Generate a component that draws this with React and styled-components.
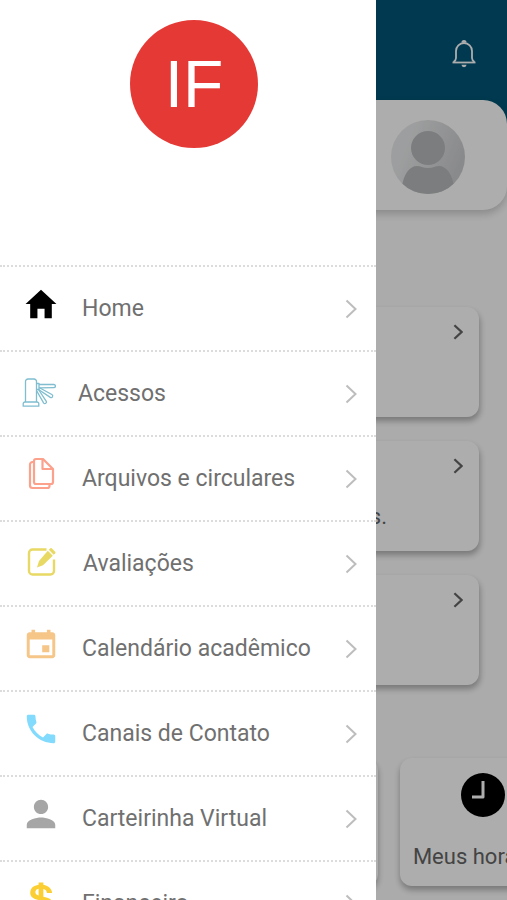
import React from 'react';
import styled, { createGlobalStyle } from 'styled-components';
import {
  IoMdHome,
  IoMdCalendar,
  IoMdCall,
  IoMdPerson,
  IoLogoUsd,
} from 'react-icons/io';

const TurnstileIcon = () => (
  <svg width="34" height="30" viewBox="0 0 34 30" fill="none" stroke="#7fbdcf" strokeWidth="1.3" strokeLinejoin="round">
    <path d="M3.500 24V3.500a2.500 2.500 0 0 1 2.500-2.500h6a2.500 2.500 0 0 1 2.500 2.500V24" />
    <path d="M3 24h12a1.800 1.800 0 0 1 1.800 1.800v2.400H1.200v-2.400A1.800 1.800 0 0 1 3 24z" />
    <path d="M14.500 5.500h2.500v6h-2.500" />
    <path d="M17 6.500h14.800a1.500 1.500 0 0 1 0 3.200L17 9.800" />
    <path d="M17.500 9.800l12.300 6.700a1.600 1.600 0 0 1-1.500 2.900L16.500 11.500" />
    <path d="M16.800 12l7.500 11.300a1.600 1.600 0 0 1-2.600 1.800L14.800 13" />
  </svg>
);

const FilesIcon = () => (
  <svg width="38" height="38" viewBox="0 0 38 38" fill="none" stroke="#fba18c" strokeWidth="2.2" strokeLinejoin="round">
    <path d="M14 4h7l10 10v13a2 2 0 0 1-2 2H14a2 2 0 0 1-2-2V6a2 2 0 0 1 2-2z" />
    <path d="M20.500 4v10H31" />
    <path d="M12 7h-1.500A2.500 2.500 0 0 0 8 9.500v21a2.500 2.500 0 0 0 2.500 2.500h15a2 2 0 0 0 2-2v-2" />
  </svg>
);

const EditIcon = () => (
  <svg width="39" height="38" viewBox="0 0 39 38">
    <path
      d="M24.500 5.500H10.500A3.500 3.500 0 0 0 7 9v18a3.500 3.500 0 0 0 3.500 3.500h18a3.500 3.500 0 0 0 3.500-3.500V15.500"
      fill="none"
      stroke="#e8d964"
      strokeWidth="2.400"
    />
    <path d="M25.800 6.800l5 5L21 21.200l-6 2.300 2-6.500z" fill="#e8d964" />
    <path d="M26.800 5.800l1.500-1.500a1 1 0 0 1 1.400 0l3.500 3.500a1 1 0 0 1 0 1.400l-1.500 1.500z" fill="#e8d964" />
  </svg>
);

const BellIcon = () => (
  <svg width="26" height="30" viewBox="0 0 26 30" fill="none" stroke="#fff" strokeWidth="1.800">
    <path d="M1.500 23.500h23" />
    <path d="M2.500 23c1.500-1 2.500-2 2.500-4v-7a8 8 0 0 1 16 0v7c0 2 1 3 2.500 4" />
    <path d="M11.300 3.500a1.700 1.700 0 0 1 3.400 0" fill="#fff" />
    <path d="M10.500 25.800h5a2.500 2.400 0 0 1-5 0z" fill="#fff" stroke="none" />
  </svg>
);

const UserPicture = () => (
  <svg width="74" height="74" viewBox="0 0 74 74" role="img" aria-label="Perfil">
    <defs>
      <linearGradient id="picture" x1="0" y1="0" x2="1" y2="0.4">
        <stop offset="0.3" stopColor="#e8e9ea" />
        <stop offset="1" stopColor="#cbccce" />
      </linearGradient>
      <clipPath id="round">
        <circle cx="37" cy="37" r="37" />
      </clipPath>
    </defs>
    <g clipPath="url(#round)">
      <rect width="74" height="74" fill="url(#picture)" />
      <path d="M11 68c1-14 8-22 15-22 3 0 6 2 11 2s8-2 11-2c7 0 14 8 15 22v10H11z" fill="#b7b9bb" />
      <circle cx="37" cy="28" r="17" fill="#b7b9bb" />
    </g>
  </svg>
);

const ClockIcon = () => (
  <svg width="44" height="44" viewBox="0 0 44 44">
    <circle cx="22" cy="22" r="22" fill="#000" />
    <path d="M22 8v16H11" fill="none" stroke="#fff" strokeWidth="3" strokeLinejoin="round" />
  </svg>
);

const Chevron = ({ width, height, color, stroke }) => (
  <svg width={width} height={height} viewBox="0 0 12 20" fill="none" stroke={color} strokeWidth={stroke}>
    <path d="M1.500 1.500L10.500 10l-9 8.500" />
  </svg>
);

const menu = [
  { label: 'Home', icon: <IoMdHome size={38} color="#000" />, raised: true },
  { label: 'Acessos', icon: <TurnstileIcon /> },
  { label: 'Arquivos e circulares', icon: <FilesIcon />, raised: true },
  { label: 'Avaliações', icon: <EditIcon /> },
  { label: 'Calendário acadêmico', icon: <IoMdCalendar size={38} color="#f5c688" />, raised: true },
  { label: 'Canais de Contato', icon: <IoMdCall size={38} color="#82dafc" />, raised: true },
  { label: 'Carteirinha Virtual', icon: <IoMdPerson size={38} color="#a6a6a6" />, raised: true },
  { label: 'Financeiro', icon: <IoLogoUsd size={38} color="#fbcf33" />, raised: true },
];

const notices = ['', 's.', ''];

const App = () => {
  return (
    <>
      <GlobalStyle />
      <Page>
        <TopBar>
          <BellButton aria-label="Notificações">
            <BellIcon />
          </BellButton>
        </TopBar>
        <ProfileCard>
          <UserPicture />
        </ProfileCard>
        <Notices>
          {notices.map((text, index) => (
            <Notice key={index}>
              <Chevron width={10} height={16} color="#656565" stroke={2.8} />
              <NoticeText>{text}</NoticeText>
            </Notice>
          ))}
        </Notices>
        <Tiles>
          <Tile />
          <Tile />
          <Tile>
            <ClockIcon />
            <TileLabel>Meus horários</TileLabel>
          </Tile>
        </Tiles>
      </Page>
      <Backdrop />
      <Drawer>
        <DrawerHeader>
          <Initials>IF</Initials>
        </DrawerHeader>
        {menu.map((item) => (
          <MenuItem href="#" key={item.label}>
            <MenuIcon $raised={item.raised}>{item.icon}</MenuIcon>
            <MenuLabel>{item.label}</MenuLabel>
            <Chevron width={12} height={20} color="#bdbdbd" stroke={2} />
          </MenuItem>
        ))}
      </Drawer>
    </>
  );
};

export default App;

const GlobalStyle = createGlobalStyle`
  * {
    box-sizing: border-box;
  }
  body {
    margin: 0;
    font-family: Roboto, sans-serif;
    overflow: hidden;
  }
  svg {
    display: block;
    flex-shrink: 0;
  }
`;

const Page = styled.main`
  min-height: 100vh;
  overflow: hidden;
  background: #fdfdfd;
`;
const TopBar = styled.header`
  display: flex;
  justify-content: flex-end;
  align-items: flex-start;
  height: 150px;
  padding: 39px 30px 0;
  background: #005576;
`;
const BellButton = styled.button`
  padding: 0;
  border: none;
  background: none;
`;
const ProfileCard = styled.section`
  display: flex;
  justify-content: flex-end;
  align-items: center;
  height: 110px;
  margin-top: -50px;
  padding: 4px 42px 0;
  border-radius: 0 24px 24px 0;
  background: #fff;
  box-shadow: 0 4px 8px rgba(0, 0, 0, 0.2);
`;
const Notices = styled.section`
  display: flex;
  flex-direction: column;
  gap: 24px;
  padding: 97px 28px 0;
`;
const Notice = styled.article`
  display: flex;
  flex-direction: column;
  align-items: flex-end;
  justify-content: space-between;
  height: 110px;
  padding: 17px 16px 20px;
  border-radius: 12px;
  background: #fff;
  box-shadow: 1px 4px 6px rgba(0, 0, 0, 0.3);
`;
const NoticeText = styled.p`
  margin: 0;
  padding-right: 76px;
  font-size: 22px;
  line-height: 28px;
  color: #656565;
`;
const Tiles = styled.section`
  display: flex;
  gap: 22px;
  padding: 73px 24px 24px;
`;
const Tile = styled.article`
  display: flex;
  flex-direction: column;
  align-items: center;
  justify-content: space-between;
  flex: 0 0 166px;
  height: 128px;
  padding: 15px 0;
  border-radius: 12px;
  background: #fff;
  box-shadow: 0 4px 6px rgba(0, 0, 0, 0.3);
`;
const TileLabel = styled.span`
  font-size: 22px;
  line-height: 28px;
  white-space: nowrap;
  color: #656565;
`;
const Backdrop = styled.div`
  position: fixed;
  inset: 0;
  background: rgba(0, 0, 0, 0.32);
`;
const Drawer = styled.nav`
  position: fixed;
  top: 0;
  bottom: 0;
  left: 0;
  width: calc(100% - 131px);
  overflow: hidden;
  background: #fff;
`;
const DrawerHeader = styled.div`
  display: flex;
  justify-content: center;
  align-items: flex-start;
  height: 265px;
  padding: 20px 0 0 12px;
`;
const Initials = styled.div`
  width: 128px;
  height: 128px;
  border-radius: 50%;
  background: #e53935;
  color: #fff;
  font-family: 'Liberation Sans', sans-serif;
  font-size: 66px;
  line-height: 128px;
  text-align: center;
`;
const MenuItem = styled.a`
  display: flex;
  align-items: center;
  gap: 22px;
  height: 85px;
  padding: 0 19px 0 22px;
  border-top: 2px dotted #dcdcdc;
  color: #707070;
  text-decoration: none;
`;
const MenuIcon = styled.span`
  padding-bottom: ${({ $raised }) => ($raised ? '10px' : '2px')};
`;
const MenuLabel = styled.span`
  flex: 1;
  font-size: 23px;
  line-height: 28px;
  white-space: nowrap;
`;
